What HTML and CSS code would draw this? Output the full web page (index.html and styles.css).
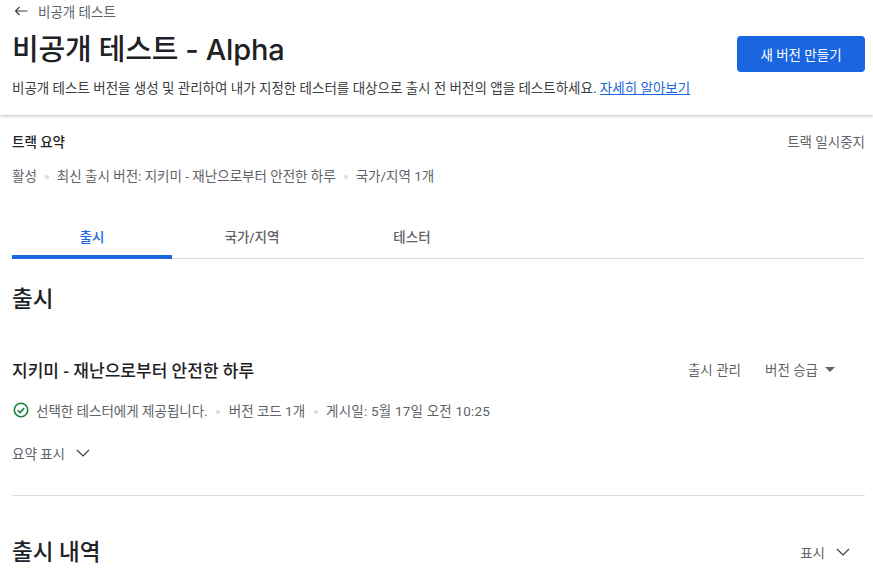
FILE: index.html
```html
<!DOCTYPE html>
<html lang="ko">
<head>
<meta charset="utf-8">
<title>비공개 테스트 - Alpha</title>
<link rel="stylesheet" href="styles.css">
</head>
<body>
<header class="header">
  <div class="crumb">
    <svg class="crumb-icon" width="16" height="16" viewBox="0 0 16 16"><path d="M14.5 8H2.5M6.5 4L2.5 8l4 4" fill="none" stroke="#3c4043" stroke-width="1.2"/></svg>
    <span>비공개 테스트</span>
  </div>
  <div class="title-row">
    <h1 class="title">비공개 테스트 - Alpha</h1>
    <button class="primary">새 버전 만들기</button>
  </div>
  <p class="desc">비공개 테스트 버전을 생성 및 관리하여 내가 지정한 테스터를 대상으로 출시 전 버전의 앱을 테스트하세요. <a href="#" class="link">자세히 알아보기</a></p>
</header>
<main class="content">
  <div class="summary-head">
    <h2 class="summary-title">트랙 요약</h2>
    <span class="action">트랙 일시중지</span>
  </div>
  <div class="meta summary-meta">
    <span>활성</span><i class="dot"></i><span>최신 출시 버전: 지키미 - 재난으로부터 안전한 하루</span><i class="dot"></i><span>국가/지역 1개</span>
  </div>
  <nav class="tabs">
    <a class="tab active">출시</a>
    <a class="tab">국가/지역</a>
    <a class="tab">테스터</a>
  </nav>
  <h2 class="section-title">출시</h2>
  <section class="release">
    <div class="release-head">
      <h3 class="release-name">지키미 - 재난으로부터 안전한 하루</h3>
      <div class="release-actions">
        <span class="action">출시 관리</span>
        <span class="action promote">버전 승급<svg width="10" height="5" viewBox="0 0 10 5"><path d="M0 0h10L5 5z" fill="#5f6368"/></svg></span>
      </div>
    </div>
    <div class="meta status">
      <svg width="16" height="16" viewBox="0 0 16 16"><circle cx="8" cy="8" r="6.7" fill="none" stroke="#188038" stroke-width="1.6"/><path d="M4.8 8.2l2.3 2.3 4.1-4.4" fill="none" stroke="#188038" stroke-width="1.6"/></svg>
      <span>선택한 테스터에게 제공됩니다.</span><i class="dot"></i><span>버전 코드 1개</span><i class="dot"></i><span class="published">게시일: 5월 17일 오전 10:25</span>
    </div>
    <div class="toggle">
      <span>요약 표시</span>
      <svg width="14" height="8" viewBox="0 0 14 8"><path d="M1 1l6 6 6-6" fill="none" stroke="#3c4043" stroke-width="1.2"/></svg>
    </div>
  </section>
  <div class="history-head">
    <h2 class="section-title history-title">출시 내역</h2>
    <div class="toggle history-toggle">
      <span>표시</span>
      <svg width="14" height="8" viewBox="0 0 14 8"><path d="M1 1l6 6 6-6" fill="none" stroke="#3c4043" stroke-width="1.2"/></svg>
    </div>
  </div>
</main>
</body>
</html>
```
FILE: styles.css
```css
* { box-sizing: border-box; }
html, body { margin: 0; height: 100%; overflow: hidden; background: #fff; }
body { font-family: Roboto, "Noto Sans CJK KR", sans-serif; color: #202124; font-size: 13.5px; }
h1, h2, h3, p { margin: 0; font-weight: 400; }
.header { height: 115px; padding: 0 8px 0 12px; box-shadow: 0 1px 3px rgba(60,64,67,.35); }
.crumb { display: flex; align-items: center; gap: 9px; height: 22px; padding-left: 1px; font-size: 13.5px; color: #5f6368; }
.title-row { display: flex; justify-content: space-between; align-items: flex-start; padding-top: 6px; height: 54px; }
.title { font-size: 29px; line-height: 44px; font-weight: 500; font-family: Inter, "Noto Sans CJK KR", sans-serif; letter-spacing: -.15px; word-spacing: -.5px; }
.primary { width: 128px; height: 36px; margin-top: 8px; border: 0; border-radius: 4px; background: #1a65e0; color: #fff; font: 400 13.5px Roboto, "Noto Sans CJK KR", sans-serif; }
.desc { line-height: 24px; font-size: 13.5px; color: #3c4043; white-space: nowrap; }
.link { color: #1a65e0; }
.content { padding: 0 8px 0 12px; }
.summary-head { display: flex; justify-content: space-between; align-items: center; height: 24px; margin-top: 14px; }
.summary-title { font-size: 13.5px; font-weight: 500; }
.action { font-size: 13.5px; color: #5f6368; }
.meta { display: flex; align-items: center; color: #5f6368; font-size: 13.5px; white-space: nowrap; }
.summary-meta { height: 24px; margin-top: 10px; }
.dot { width: 4px; height: 4px; border-radius: 50%; background: #dadce0; margin: 3px 8px 0; }
.tabs { display: flex; height: 46px; margin-top: 26px; border-bottom: 1px solid #dadce0; }
.tab { width: 160px; display: flex; justify-content: center; padding-top: 13px; font-size: 13.5px; font-weight: 500; color: #5f6368; }
.tab.active { color: #1a65e0; border-bottom: 4px solid #1a65e0; border-radius: 4px 4px 0 0; height: 46px; }
.section-title { font-size: 22.5px; line-height: 32px; font-weight: 500; margin-top: 24px; }
.release { height: 141px; margin-top: 40px; border-bottom: 1px solid #dadce0; }
.release-head { display: flex; justify-content: space-between; align-items: center; height: 28px; padding-right: 30px; }
.release-name { font-size: 17px; font-weight: 500; letter-spacing: .03px; }
.release-actions { display: flex; gap: 24px; }
.promote { display: flex; align-items: center; gap: 7px; }
.status { margin-top: 15px; height: 24px; }
.status svg { margin: 0 7px 0 1px; }
.status .dot { margin: 3px 8.5px 0; }
.published { letter-spacing: .2px; }
.toggle { display: flex; align-items: center; gap: 11px; color: #5f6368; font-size: 13.5px; margin-top: 19px; height: 24px; }
.history-head { display: flex; justify-content: space-between; align-items: center; margin-top: 24px; padding-right: 15px; height: 64px; }
.history-title { margin: 0; }
.history-toggle { margin: 0; }
```
